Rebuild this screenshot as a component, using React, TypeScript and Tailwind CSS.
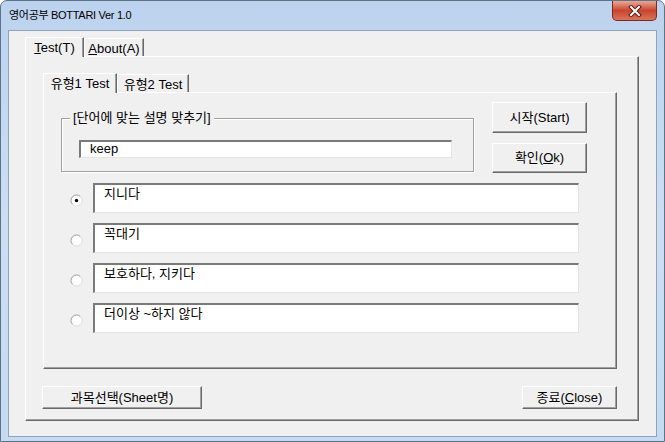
import React from 'react';

const raised =
  'bg-[#f0f0f0] border-t border-l border-t-white border-l-white border-r border-b border-r-[#696969] border-b-[#696969] shadow-[inset_-1px_-1px_0_#a0a0a0]';
const sunken =
  'bg-white border-t-2 border-l-2 border-t-[#7a7a7a] border-l-[#7a7a7a] border-r border-b border-r-[#e3e3e3] border-b-[#e3e3e3]';

const Btn: React.FC<{ className: string; children: React.ReactNode }> = ({ className, children }) => (
  <div className={`${raised} ${className} flex items-center justify-center text-[13px] text-black`}>{children}</div>
);

const Tab: React.FC<{ selected?: boolean; className: string; children: React.ReactNode }> = ({
  selected,
  className,
  children,
}) => (
  <div
    className={`${className} relative flex items-center justify-center text-[13px] border-l border-t border-l-white border-t-white border-r border-r-[#696969] shadow-[inset_-1px_0_0_#a0a0a0] bg-[#f0f0f0] ${
      selected ? 'z-10 -mb-px h-[20px] self-end' : 'h-[18px] self-end'
    }`}
  >
    {children}
  </div>
);

const Radio: React.FC<{ checked?: boolean }> = ({ checked }) => (
  <svg width="13" height="13" viewBox="0 0 13 13">
    <circle cx="6.5" cy="6.5" r="5.5" fill="#fff" />
    <path d="M10.4 2.6 A5.5 5.5 0 0 0 2.6 10.4" fill="none" stroke="#9a9a9a" strokeWidth="1" />
    <path d="M2.6 10.4 A5.5 5.5 0 0 0 10.4 2.6" fill="none" stroke="#dcdcdc" strokeWidth="1" />
    {checked && <circle cx="6.5" cy="6.5" r="1.7" fill="#000" />}
  </svg>
);

const answers = ['지니다', '꼭대기', '보호하다, 지키다', '더이상 ~하지 않다'];

export default function App() {
  return (
    <div className="w-[665px] h-[442px] bg-white font-['Liberation_Sans','Noto_Sans_CJK_KR',sans-serif] text-black">
      <div className="relative w-[665px] h-[442px] rounded-t-[7px] border border-[#5d7189] bg-gradient-to-b from-[#bcd2ee] via-[#cddef3] to-[#c6daf1] flex flex-col">
        {/* title bar */}
        <div className="h-[29px] flex items-center pl-[8px] text-[11px] tracking-[-0.3px] pb-[1px]">영어공부 BOTTARI Ver 1.0</div>
        <div className="absolute top-0 right-[7px] w-[45px] h-[20px] rounded-b-[5px] border border-t-0 border-[#7a2a1e] bg-gradient-to-b from-[#e8a796] via-[#c8442c] to-[#d9735a] flex items-center justify-center">
          <svg width="14" height="12" viewBox="0 0 14 12">
            <path d="M3 2 L11 10 M11 2 L3 10" stroke="#5b1b12" strokeWidth="4" strokeLinecap="square" />
            <path d="M3 2 L11 10 M11 2 L3 10" stroke="#fff" strokeWidth="2" strokeLinecap="square" />
          </svg>
        </div>

        {/* client area */}
        <div className="ml-[7px] w-[649px] h-[407px] bg-[#f0f0f0] border border-[#8fa3bc] pl-[16px] pt-[6px]">
          {/* outer tabs */}
          <div className="flex h-[19px] items-end">
            <Tab selected className="w-[59px]">
              <span>
                <span className="underline">T</span>est(T)
              </span>
            </Tab>
            <Tab className="w-[60px] pt-[2px]">
              <span>
                <span className="underline">A</span>bout(A)
              </span>
            </Tab>
          </div>
          <div className={`${raised} w-[614px] h-[365px] pl-[17px] pt-[15px]`}>
            {/* inner tabs */}
            <div className="flex h-[20px] items-end">
              <Tab selected className="w-[74px]">
                유형1 Test
              </Tab>
              <Tab className="w-[72px] pt-[2px]">유형2 Test</Tab>
            </div>
            <div className={`${raised} w-[574px] h-[277px] pt-[9px]`}>
              <div className="flex pl-[17px]">
                <div className="relative mt-[16px] w-[413px] h-[54px] border border-[#a0a0a0] shadow-[inset_1px_1px_0_#fff,1px_1px_0_#fff] pt-[21px] pl-[17px]">
                  <div className="absolute left-[8px] -top-[10px] px-[3px] bg-[#f0f0f0] text-[13px] leading-[17px]">
                    [단어에 맞는 설명 맞추기]
                  </div>
                  <div className={`${sunken} w-[373px] h-[18px] pl-[9px] text-[13px] leading-[14px]`}>keep</div>
                </div>
                <div className="ml-[18px] flex flex-col gap-[10px]">
                  <Btn className="w-[95px] h-[31px]">시작(Start)</Btn>
                  <Btn className="w-[95px] h-[30px]">
                    <span>
                      확인(<span className="underline">O</span>k)
                    </span>
                  </Btn>
                </div>
              </div>
              <div className="mt-[10px] flex flex-col gap-[10px] pl-[26px]">
                {answers.map((a, i) => (
                  <div key={a} className="flex items-start">
                    <div className="mt-[11px]">
                      <Radio checked={i === 0} />
                    </div>
                    <div className={`${sunken} ml-[10px] w-[486px] h-[30px] pl-[9px] text-[13px] leading-[17px]`}>{a}</div>
                  </div>
                ))}
              </div>
            </div>
            <div className="mt-[17px] flex justify-between w-[574px]">
              <Btn className="w-[160px] h-[23px] -ml-px">과목선택(Sheet명)</Btn>
              <Btn className="w-[95px] h-[23px]">
                <span>
                  종료(<span className="underline">C</span>lose)
                </span>
              </Btn>
            </div>
          </div>
        </div>
      </div>
    </div>
  );
}
